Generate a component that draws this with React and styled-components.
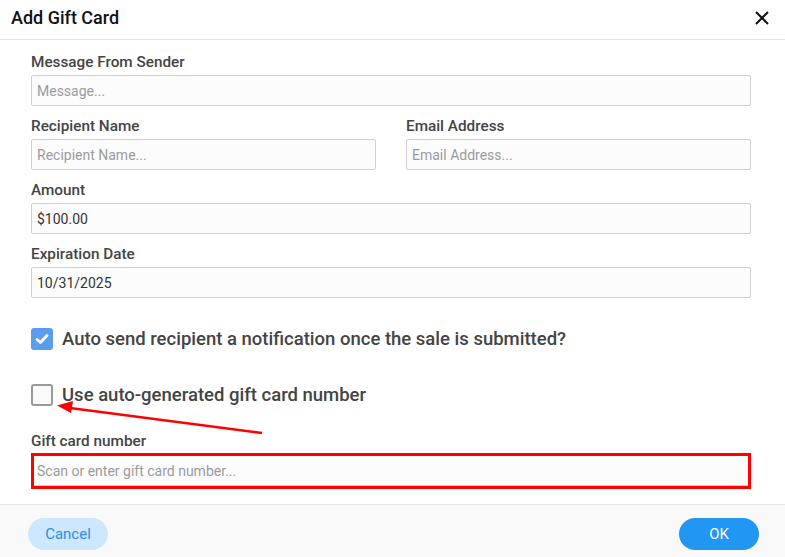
import React from 'react';
import styled, { createGlobalStyle } from 'styled-components';

const Global = createGlobalStyle`
  html, body { margin: 0; padding: 0; background: #fff; }
  body { font-family: Roboto, "Noto Sans", "Liberation Sans", sans-serif; }
  * { box-sizing: border-box; }
`;

function Field({ label, placeholder, value }) {
  return (
    <FieldWrap>
      <Label>{label}</Label>
      <Input placeholder={placeholder} defaultValue={value} />
    </FieldWrap>
  );
}

function Check({ checked, children }) {
  return (
    <CheckRow>
      <Box checked={checked}>
        {checked && (
          <svg width="14" height="12" viewBox="0 0 14 12">
            <path d="M2 6.5 L5.5 9.5 L12 2.5" fill="none" stroke="#fff" strokeWidth="2.8" strokeLinecap="round" strokeLinejoin="round" />
          </svg>
        )}
      </Box>
      <CheckText>{children}</CheckText>
    </CheckRow>
  );
}

export default function App() {
  return (
    <Modal>
      <Global />
      <Header>
        <Title>Add Gift Card</Title>
        <Close aria-label="close">
          <svg width="14" height="14" viewBox="0 0 14 14">
            <path d="M1 1 L13 13 M13 1 L1 13" stroke="#111" strokeWidth="2" />
          </svg>
        </Close>
      </Header>
      <Body>
        <Field label="Message From Sender" placeholder="Message..." />
        <Row>
          <Field label="Recipient Name" placeholder="Recipient Name..." />
          <Field label="Email Address" placeholder="Email Address..." />
        </Row>
        <Field label="Amount" value="$100.00" />
        <Field label="Expiration Date" value="10/31/2025" />
        <Checks>
          <Check checked>Auto send recipient a notification once the sale is submitted?</Check>
          <Check>Use auto-generated gift card number</Check>
        </Checks>
        <FieldWrap>
          <Label>Gift card number</Label>
          <Highlight>
            <PlainInput placeholder="Scan or enter gift card number..." />
          </Highlight>
        </FieldWrap>
      </Body>
      <Footer>
        <Button>Cancel</Button>
        <Button primary>OK</Button>
      </Footer>
      <Arrow width="785" height="557" viewBox="0 0 785 557">
        <line x1="262" y1="433" x2="70" y2="408" stroke="#f00" strokeWidth="2.5" />
        <polygon points="57,405.5 73,401 71,413" fill="#f00" />
      </Arrow>
    </Modal>
  );
}

const Modal = styled.div`
  position: relative;
  width: 785px;
  height: 557px;
  display: flex;
  flex-direction: column;
  background: #fff;
  overflow: hidden;
`;
const Header = styled.div`
  height: 40px;
  display: flex;
  align-items: center;
  justify-content: space-between;
  padding: 0 16px 4px 11px;
  border-bottom: 1px solid #e3e3e3;
`;
const Title = styled.h1`
  margin: 0;
  font-size: 18px;
  font-weight: 500;
  color: #111;
`;
const Close = styled.div`
  display: flex;
  width: 14px;
  height: 14px;
`;
const Body = styled.div`
  flex: 1;
  padding: 14px 34px 0 31px;
  display: flex;
  flex-direction: column;
  gap: 12px;
`;
const Row = styled.div`
  display: grid;
  grid-template-columns: 345px 345px;
  justify-content: space-between;
`;
const FieldWrap = styled.div`
  display: flex;
  flex-direction: column;
  gap: 4px;
`;
const Label = styled.label`
  font-size: 15.3px;
  line-height: 17px;
  font-weight: 500;
  color: #444;
`;
const Input = styled.input`
  height: 31px;
  width: 100%;
  border: 1px solid #d0d0d0;
  border-radius: 2px;
  background: #fcfcfc;
  padding: 0 5px;
  font-family: inherit;
  font-size: 14px;
  color: #333;
  outline: none;
  &::placeholder { color: #9b9b9b; }
`;
const Highlight = styled.div`
  height: 36px;
  border: 3px solid #f00;
  margin-top: -1px;
`;
const PlainInput = styled(Input)`
  height: 30px;
  border: none;
  border-bottom: 1px solid #ccc;
  border-radius: 0;
  padding: 0 3px;
`;
const Checks = styled.div`
  display: flex;
  flex-direction: column;
  gap: 34px;
  margin: 18px 0 15px;
`;
const CheckRow = styled.div`
  display: flex;
  align-items: center;
  gap: 9px;
  height: 22px;
`;
const Box = styled.span`
  width: 22px;
  height: 22px;
  border-radius: 3px;
  display: flex;
  align-items: center;
  justify-content: center;
  background: ${p => (p.checked ? '#5a9ded' : '#fafafa')};
  border: ${p => (p.checked ? 'none' : '2px solid #999')};
`;
const CheckText = styled.span`
  font-size: 18.5px;
  font-weight: 500;
  color: #444;
`;
const Footer = styled.div`
  height: 53px;
  border-top: 1px solid #e3e3e3;
  background: #f9f9f9;
  display: flex;
  align-items: center;
  justify-content: space-between;
  padding: 5px 26px 0 28px;
`;
const Button = styled.button`
  width: 80px;
  height: 32px;
  border: none;
  border-radius: 16px;
  font-family: inherit;
  font-size: 15px;
  background: ${p => (p.primary ? '#2196f3' : '#cce7ff')};
  color: ${p => (p.primary ? '#fff' : '#2c8de8')};
`;
const Arrow = styled.svg`
  position: absolute;
  left: 0;
  top: 0;
  pointer-events: none;
`;
